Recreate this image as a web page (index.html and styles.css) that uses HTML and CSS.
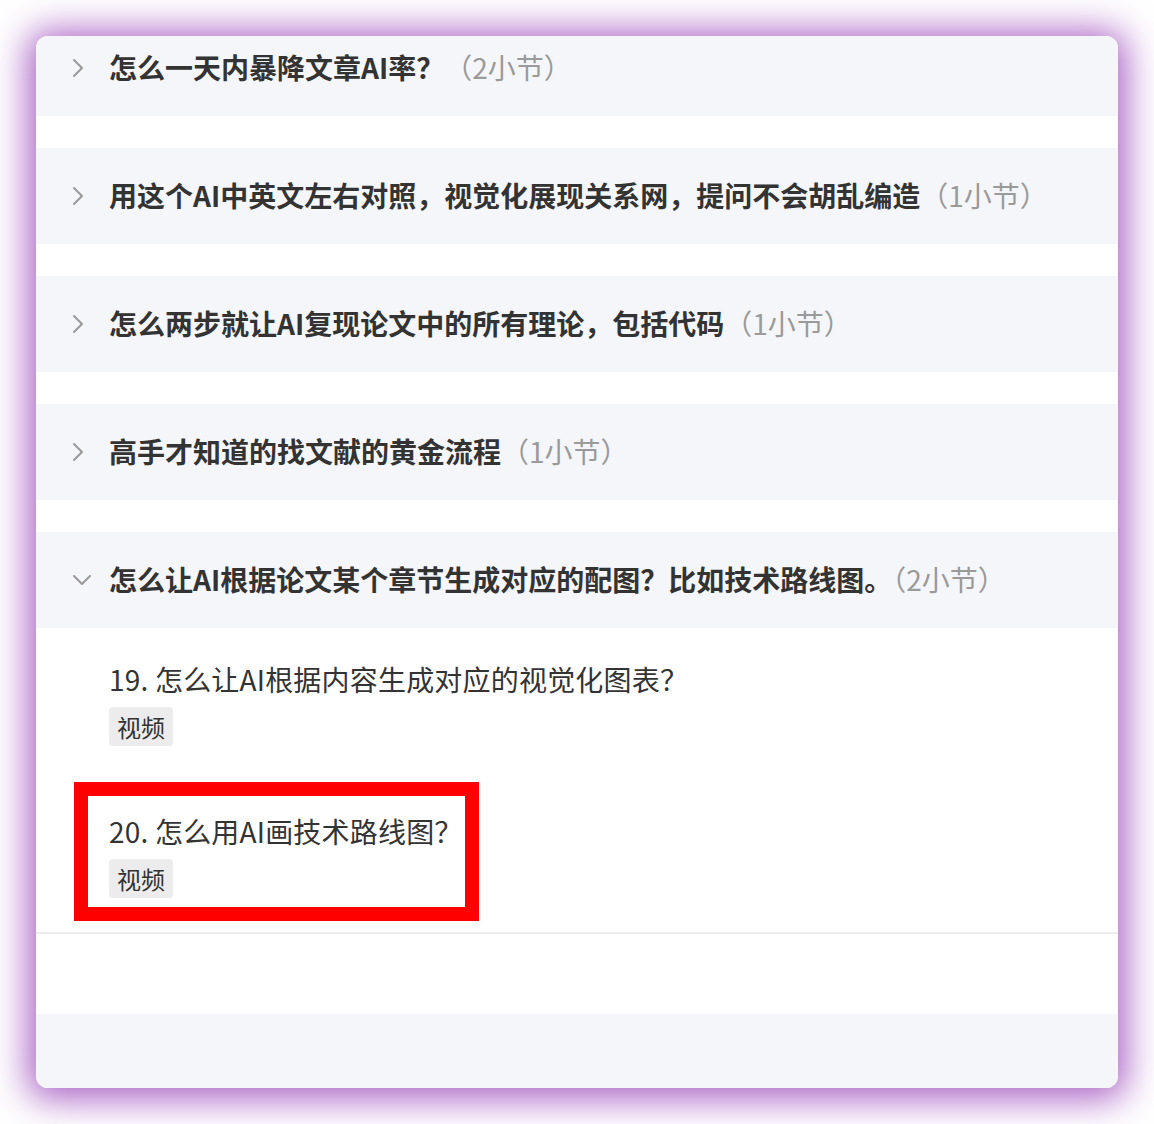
FILE: index.html
```html
<!DOCTYPE html>
<html lang="zh-CN">
<head>
<meta charset="utf-8">
<title>课程目录</title>
<link rel="stylesheet" href="styles.css">
</head>
<body>
<div class="card">
  <div class="list">
    <section class="chapter">
      <div class="chapter-head">
        <span class="chev"><svg width="12" height="20" viewBox="0 0 12 20"><path d="M2 2 L10 10 L2 18" /></svg></span>
        <span class="title">怎么一天内暴降文章AI率？<span class="count">（2小节）</span></span>
      </div>
    </section>
    <section class="chapter">
      <div class="chapter-head">
        <span class="chev"><svg width="12" height="20" viewBox="0 0 12 20"><path d="M2 2 L10 10 L2 18" /></svg></span>
        <span class="title">用这个AI中英文左右对照，视觉化展现关系网，提问不会胡乱编造<span class="count">（1小节）</span></span>
      </div>
    </section>
    <section class="chapter">
      <div class="chapter-head">
        <span class="chev"><svg width="12" height="20" viewBox="0 0 12 20"><path d="M2 2 L10 10 L2 18" /></svg></span>
        <span class="title">怎么两步就让AI复现论文中的所有理论，包括代码<span class="count">（1小节）</span></span>
      </div>
    </section>
    <section class="chapter">
      <div class="chapter-head">
        <span class="chev"><svg width="12" height="20" viewBox="0 0 12 20"><path d="M2 2 L10 10 L2 18" /></svg></span>
        <span class="title">高手才知道的找文献的黄金流程<span class="count">（1小节）</span></span>
      </div>
    </section>
    <section class="chapter chapter-open">
      <div class="chapter-head">
        <span class="chev"><svg width="20" height="12" viewBox="0 0 20 12"><path d="M2 2 L10 10 L18 2" /></svg></span>
        <span class="title">怎么让AI根据论文某个章节生成对应的配图？比如技术路线图。<span class="count">（2小节）</span></span>
      </div>
      <div class="chapter-body">
        <div class="lesson">
          <div class="lesson-title">19. 怎么让AI根据内容生成对应的视觉化图表？</div>
          <span class="tag">视频</span>
        </div>
        <div class="lesson">
          <div class="lesson-title">20. 怎么用AI画技术路线图？</div>
          <span class="tag">视频</span>
          <div class="highlight"></div>
        </div>
      </div>
    </section>
    <div class="footer-block"></div>
  </div>
</div>
</body>
</html>
```

FILE: styles.css
```css
html, body {
  margin: 0;
  padding: 0;
  background: #ffffff;
}

body {
  padding: 36px;
  font-family: "Noto Sans CJK SC", "Noto Sans", sans-serif;
  color: #333333;
}

.card {
  width: 1082px;
  height: 1052px;
  border-radius: 12px;
  overflow: hidden;
  background: #ffffff;
  box-shadow: 0 3px 36px 8px rgba(160, 80, 190, 0.9);
}

.list {
  margin-top: -16px;
}

.chapter {
  margin-bottom: 32px;
}

.chapter-open {
  margin-bottom: 80px;
}

.chapter-head {
  height: 96px;
  box-sizing: border-box;
  padding-bottom: 2px;
  background: #f5f6fa;
  display: flex;
  align-items: center;
  padding-left: 34px;
}

.chev {
  flex: none;
  width: 20px;
  height: 20px;
  display: flex;
  align-items: center;
  justify-content: flex-start;
  margin-left: 2px;
  margin-top: 2px;
}

.chev svg path {
  fill: none;
  stroke: #999999;
  stroke-width: 2;
  stroke-linecap: round;
  stroke-linejoin: round;
}

.title {
  margin-left: 17px;
  font-size: 28px;
  line-height: 36px;
  font-weight: 600;
  color: #333333;
  white-space: nowrap;
}

.count {
  font-weight: 400;
  color: #9a9a9a;
}

.chapter-body {
  border-bottom: 2px solid #ececec;
}

.lesson {
  position: relative;
  display: flex;
  flex-direction: column;
  align-items: flex-start;
  gap: 10px;
  padding: 33px 0 34px 73px;
}

.lesson-title {
  font-size: 28px;
  line-height: 36px;
  font-weight: 400;
  color: #333333;
  letter-spacing: 0.2px;
}

.tag {
  display: block;
  height: 39px;
  line-height: 39px;
  padding: 0 8px;
  font-size: 24px;
  color: #333333;
  background: #ececec;
  border-radius: 4px;
}

.highlight {
  position: absolute;
  left: 38px;
  top: 2px;
  width: 405px;
  height: 139px;
  box-sizing: border-box;
  border: 14px solid #ff0000;
  pointer-events: none;
}

.footer-block {
  height: 120px;
  background: #f5f6fa;
}
```
